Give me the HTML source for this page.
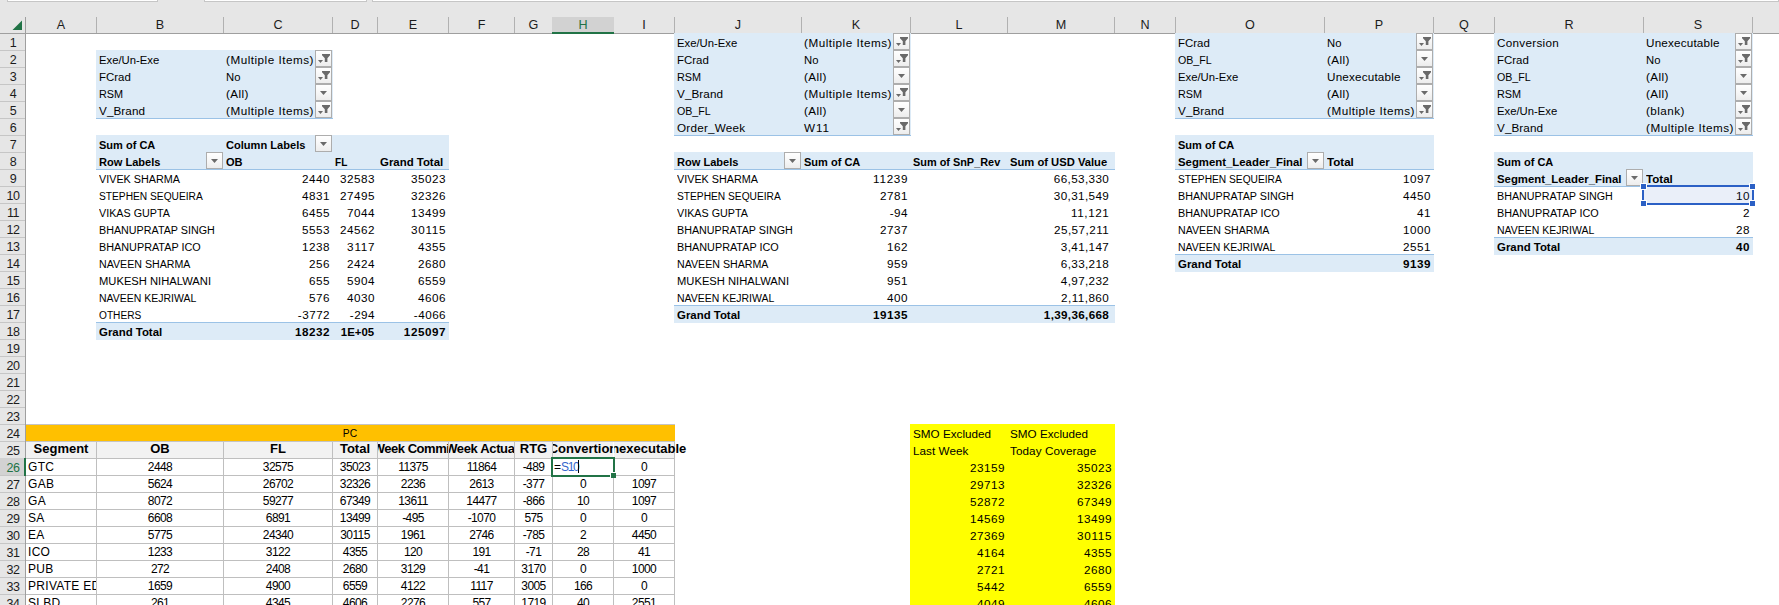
<!DOCTYPE html>
<html><head><meta charset="utf-8"><title>Sheet</title>
<style>
html,body{margin:0;padding:0;background:#fff;}
body{width:1779px;height:605px;overflow:hidden;position:relative;font-family:"Liberation Sans",sans-serif;color:#000;}
#s{position:absolute;left:0;top:0;width:1779px;height:605px;overflow:hidden;background:#fff;}
#s div,#s span,#s svg{position:absolute;}
.f{}
.t{white-space:pre;font-size:11.7px;line-height:17px;height:17px;}
.b{font-weight:bold;}
.l{transform-origin:0 50%;}
.r{transform-origin:100% 50%;}
.c{transform-origin:50% 50%;}
.ch{top:17px;height:16px;line-height:17px;font-size:12.6px;text-align:center;color:#1c1c1c;}
.cs{top:17px;width:1px;height:16px;background:#b1b1b1;}
.rh{left:0.5px;width:25px;height:17px;line-height:19px;font-size:12.5px;letter-spacing:-0.5px;text-align:center;color:#1c1c1c;}
.rs{left:0;width:25px;height:1px;background:#c6c6c6;}
.a{font-size:12px;line-height:17px;height:17px;white-space:pre;text-align:center;overflow:hidden;}
.n{letter-spacing:-0.6px;}
#s .hc{display:flex;justify-content:center;}
#s .hc span{position:static;flex:none;}
.hc{font-size:13px !important;}
.g{background:#bfbfbf;}
</style></head><body><div id="s">

<div style="left:0;top:0;width:1779px;height:34px;background:#e6e6e6"></div>
<div style="left:7px;top:-1px;width:151px;height:2px;background:#fff;border:1px solid #c6c6c6;box-sizing:border-box;height:3px"></div>
<div style="left:204px;top:-1px;width:163px;height:2px;background:#fff;border:1px solid #c6c6c6;box-sizing:border-box;height:3px"></div>
<div style="left:372px;top:-1px;width:1407px;height:2px;background:#fff;border:1px solid #c6c6c6;box-sizing:border-box;height:3px"></div>
<div style="left:0;top:34px;width:26px;height:571px;background:#e6e6e6"></div>
<div style="left:0;top:33px;width:1779px;height:1px;background:#9f9f9f"></div>
<div style="left:25px;top:17px;width:1px;height:588px;background:#9f9f9f"></div>
<svg style="left:12px;top:20px" width="11" height="11" viewBox="0 0 11 11"><path d="M10 0.5 L10 10 L0.5 10 Z" fill="#217346"/></svg>
<div class="ch" style="left:26px;width:70px">A</div>
<div class="ch" style="left:97px;width:126px">B</div>
<div class="ch" style="left:224px;width:108px">C</div>
<div class="ch" style="left:333px;width:44px">D</div>
<div class="ch" style="left:378px;width:70px">E</div>
<div class="ch" style="left:449px;width:65px">F</div>
<div class="ch" style="left:515px;width:37px">G</div>
<div style="left:552px;top:17px;width:62px;height:15px;background:#d2d2d2"></div>
<div style="left:552px;top:32px;width:62px;height:2px;background:#217346"></div>
<div class="ch" style="left:553px;width:60px;color:#217346">H</div>
<div class="ch" style="left:614px;width:60px">I</div>
<div class="ch" style="left:675px;width:126px">J</div>
<div class="ch" style="left:802px;width:108px">K</div>
<div class="ch" style="left:911px;width:96px">L</div>
<div class="ch" style="left:1008px;width:106px">M</div>
<div class="ch" style="left:1115px;width:60px">N</div>
<div class="ch" style="left:1176px;width:148px">O</div>
<div class="ch" style="left:1325px;width:108px">P</div>
<div class="ch" style="left:1434px;width:60px">Q</div>
<div class="ch" style="left:1495px;width:148px">R</div>
<div class="ch" style="left:1644px;width:108px">S</div>
<div class="cs" style="left:96px"></div>
<div class="cs" style="left:223px"></div>
<div class="cs" style="left:332px"></div>
<div class="cs" style="left:377px"></div>
<div class="cs" style="left:448px"></div>
<div class="cs" style="left:514px"></div>
<div class="cs" style="left:674px"></div>
<div class="cs" style="left:801px"></div>
<div class="cs" style="left:910px"></div>
<div class="cs" style="left:1007px"></div>
<div class="cs" style="left:1114px"></div>
<div class="cs" style="left:1175px"></div>
<div class="cs" style="left:1324px"></div>
<div class="cs" style="left:1433px"></div>
<div class="cs" style="left:1494px"></div>
<div class="cs" style="left:1643px"></div>
<div class="cs" style="left:1752px"></div>
<div class="rh" style="top:34px">1</div>
<div class="rs" style="top:50px"></div>
<div class="rh" style="top:51px">2</div>
<div class="rs" style="top:67px"></div>
<div class="rh" style="top:68px">3</div>
<div class="rs" style="top:84px"></div>
<div class="rh" style="top:85px">4</div>
<div class="rs" style="top:101px"></div>
<div class="rh" style="top:102px">5</div>
<div class="rs" style="top:118px"></div>
<div class="rh" style="top:119px">6</div>
<div class="rs" style="top:135px"></div>
<div class="rh" style="top:136px">7</div>
<div class="rs" style="top:152px"></div>
<div class="rh" style="top:153px">8</div>
<div class="rs" style="top:169px"></div>
<div class="rh" style="top:170px">9</div>
<div class="rs" style="top:186px"></div>
<div class="rh" style="top:187px">10</div>
<div class="rs" style="top:203px"></div>
<div class="rh" style="top:204px">11</div>
<div class="rs" style="top:220px"></div>
<div class="rh" style="top:221px">12</div>
<div class="rs" style="top:237px"></div>
<div class="rh" style="top:238px">13</div>
<div class="rs" style="top:254px"></div>
<div class="rh" style="top:255px">14</div>
<div class="rs" style="top:271px"></div>
<div class="rh" style="top:272px">15</div>
<div class="rs" style="top:288px"></div>
<div class="rh" style="top:289px">16</div>
<div class="rs" style="top:305px"></div>
<div class="rh" style="top:306px">17</div>
<div class="rs" style="top:322px"></div>
<div class="rh" style="top:323px">18</div>
<div class="rs" style="top:339px"></div>
<div class="rh" style="top:340px">19</div>
<div class="rs" style="top:356px"></div>
<div class="rh" style="top:357px">20</div>
<div class="rs" style="top:373px"></div>
<div class="rh" style="top:374px">21</div>
<div class="rs" style="top:390px"></div>
<div class="rh" style="top:391px">22</div>
<div class="rs" style="top:407px"></div>
<div class="rh" style="top:408px">23</div>
<div class="rs" style="top:424px"></div>
<div class="rh" style="top:425px">24</div>
<div class="rs" style="top:441px"></div>
<div class="rh" style="top:442px">25</div>
<div class="rs" style="top:458px;width:24px"></div>
<div style="left:0;top:458px;width:25px;height:18px;background:#d2d2d2"></div>
<div style="left:24px;top:458px;width:2px;height:18px;background:#217346"></div>
<div class="rh" style="top:459px;color:#217346">26</div>
<div class="rs" style="top:475px;width:24px"></div>
<div class="rh" style="top:476px">27</div>
<div class="rs" style="top:492px"></div>
<div class="rh" style="top:493px">28</div>
<div class="rs" style="top:509px"></div>
<div class="rh" style="top:510px">29</div>
<div class="rs" style="top:526px"></div>
<div class="rh" style="top:527px">30</div>
<div class="rs" style="top:543px"></div>
<div class="rh" style="top:544px">31</div>
<div class="rs" style="top:560px"></div>
<div class="rh" style="top:561px">32</div>
<div class="rs" style="top:577px"></div>
<div class="rh" style="top:578px">33</div>
<div class="rs" style="top:594px"></div>
<div class="rh" style="top:595px">34</div>
<div class="rs" style="top:611px"></div>
<div class="f" style="left:96px;top:50px;width:237px;height:69px;background:#ddebf7"></div>
<div class="f" style="left:96px;top:135px;width:353px;height:35px;background:#ddebf7"></div>
<div class="f" style="left:96px;top:322px;width:353px;height:18px;background:#ddebf7"></div>
<div class="f" style="left:674px;top:33px;width:237px;height:103px;background:#ddebf7"></div>
<div class="f" style="left:674px;top:152px;width:441px;height:18px;background:#ddebf7"></div>
<div class="f" style="left:674px;top:305px;width:441px;height:18px;background:#ddebf7"></div>
<div class="f" style="left:1175px;top:33px;width:259px;height:86px;background:#ddebf7"></div>
<div class="f" style="left:1175px;top:135px;width:259px;height:35px;background:#ddebf7"></div>
<div class="f" style="left:1175px;top:254px;width:259px;height:18px;background:#ddebf7"></div>
<div class="f" style="left:1494px;top:33px;width:259px;height:103px;background:#ddebf7"></div>
<div class="f" style="left:1494px;top:152px;width:259px;height:35px;background:#ddebf7"></div>
<div class="f" style="left:1494px;top:237px;width:259px;height:18px;background:#ddebf7"></div>
<div class="f" style="left:910px;top:424px;width:205px;height:188px;background:#ffff00"></div>
<div class="f" style="left:26px;top:425px;width:649px;height:16px;background:#ffc000"></div>
<div style="left:96px;top:118px;width:237px;height:1px;background:#9bc2e6"></div>
<div style="left:96px;top:169px;width:353px;height:1px;background:#9bc2e6"></div>
<div style="left:96px;top:322px;width:353px;height:1px;background:#9bc2e6"></div>
<div style="left:674px;top:135px;width:237px;height:1px;background:#9bc2e6"></div>
<div style="left:674px;top:169px;width:441px;height:1px;background:#9bc2e6"></div>
<div style="left:674px;top:305px;width:441px;height:1px;background:#9bc2e6"></div>
<div style="left:1175px;top:118px;width:259px;height:1px;background:#9bc2e6"></div>
<div style="left:1175px;top:169px;width:259px;height:1px;background:#9bc2e6"></div>
<div style="left:1175px;top:254px;width:259px;height:1px;background:#9bc2e6"></div>
<div style="left:1494px;top:135px;width:259px;height:1px;background:#9bc2e6"></div>
<div style="left:1494px;top:186px;width:259px;height:1px;background:#9bc2e6"></div>
<div style="left:1494px;top:237px;width:259px;height:1px;background:#9bc2e6"></div>
<div style="left:26px;top:424px;width:649px;height:1px;background:#c4c4c4"></div>
<div style="left:26px;top:441px;width:649px;height:1px;background:#c4c4c4"></div>
<svg width="0" height="0" style="left:0;top:0"><defs><linearGradient id="bg" x1="0" y1="0" x2="0" y2="1"><stop offset="0" stop-color="#ffffff"/><stop offset="0.5" stop-color="#f7f7f7"/><stop offset="1" stop-color="#ececec"/></linearGradient></defs></svg>
<svg style="left:315px;top:50px" width="17" height="17" viewBox="0 0 17 17"><rect x="0.5" y="0.5" width="16" height="16" fill="url(#bg)" stroke="#adadad"/><path d="M7 4h8v1.2l-2.6 3V12h-2.6V8.2L7 5.2z" fill="#6a6a6a"/><path d="M3 10h5l-2.5 3z" fill="#6a6a6a"/></svg>
<svg style="left:315px;top:67px" width="17" height="17" viewBox="0 0 17 17"><rect x="0.5" y="0.5" width="16" height="16" fill="url(#bg)" stroke="#adadad"/><path d="M7 4h8v1.2l-2.6 3V12h-2.6V8.2L7 5.2z" fill="#6a6a6a"/><path d="M3 10h5l-2.5 3z" fill="#6a6a6a"/></svg>
<svg style="left:315px;top:84px" width="17" height="17" viewBox="0 0 17 17"><rect x="0.5" y="0.5" width="16" height="16" fill="url(#bg)" stroke="#adadad"/><path d="M5 7h7l-3.5 4z" fill="#6a6a6a"/></svg>
<svg style="left:315px;top:101px" width="17" height="17" viewBox="0 0 17 17"><rect x="0.5" y="0.5" width="16" height="16" fill="url(#bg)" stroke="#adadad"/><path d="M7 4h8v1.2l-2.6 3V12h-2.6V8.2L7 5.2z" fill="#6a6a6a"/><path d="M3 10h5l-2.5 3z" fill="#6a6a6a"/></svg>
<svg style="left:315px;top:135px" width="17" height="17" viewBox="0 0 17 17"><rect x="0.5" y="0.5" width="16" height="16" fill="url(#bg)" stroke="#adadad"/><path d="M5 7h7l-3.5 4z" fill="#6a6a6a"/></svg>
<svg style="left:206px;top:152px" width="17" height="17" viewBox="0 0 17 17"><rect x="0.5" y="0.5" width="16" height="16" fill="url(#bg)" stroke="#adadad"/><path d="M5 7h7l-3.5 4z" fill="#6a6a6a"/></svg>
<svg style="left:893px;top:33px" width="17" height="17" viewBox="0 0 17 17"><rect x="0.5" y="0.5" width="16" height="16" fill="url(#bg)" stroke="#adadad"/><path d="M7 4h8v1.2l-2.6 3V12h-2.6V8.2L7 5.2z" fill="#6a6a6a"/><path d="M3 10h5l-2.5 3z" fill="#6a6a6a"/></svg>
<svg style="left:893px;top:50px" width="17" height="17" viewBox="0 0 17 17"><rect x="0.5" y="0.5" width="16" height="16" fill="url(#bg)" stroke="#adadad"/><path d="M7 4h8v1.2l-2.6 3V12h-2.6V8.2L7 5.2z" fill="#6a6a6a"/><path d="M3 10h5l-2.5 3z" fill="#6a6a6a"/></svg>
<svg style="left:893px;top:67px" width="17" height="17" viewBox="0 0 17 17"><rect x="0.5" y="0.5" width="16" height="16" fill="url(#bg)" stroke="#adadad"/><path d="M5 7h7l-3.5 4z" fill="#6a6a6a"/></svg>
<svg style="left:893px;top:84px" width="17" height="17" viewBox="0 0 17 17"><rect x="0.5" y="0.5" width="16" height="16" fill="url(#bg)" stroke="#adadad"/><path d="M7 4h8v1.2l-2.6 3V12h-2.6V8.2L7 5.2z" fill="#6a6a6a"/><path d="M3 10h5l-2.5 3z" fill="#6a6a6a"/></svg>
<svg style="left:893px;top:101px" width="17" height="17" viewBox="0 0 17 17"><rect x="0.5" y="0.5" width="16" height="16" fill="url(#bg)" stroke="#adadad"/><path d="M5 7h7l-3.5 4z" fill="#6a6a6a"/></svg>
<svg style="left:893px;top:118px" width="17" height="17" viewBox="0 0 17 17"><rect x="0.5" y="0.5" width="16" height="16" fill="url(#bg)" stroke="#adadad"/><path d="M7 4h8v1.2l-2.6 3V12h-2.6V8.2L7 5.2z" fill="#6a6a6a"/><path d="M3 10h5l-2.5 3z" fill="#6a6a6a"/></svg>
<svg style="left:784px;top:152px" width="17" height="17" viewBox="0 0 17 17"><rect x="0.5" y="0.5" width="16" height="16" fill="url(#bg)" stroke="#adadad"/><path d="M5 7h7l-3.5 4z" fill="#6a6a6a"/></svg>
<svg style="left:1416px;top:33px" width="17" height="17" viewBox="0 0 17 17"><rect x="0.5" y="0.5" width="16" height="16" fill="url(#bg)" stroke="#adadad"/><path d="M7 4h8v1.2l-2.6 3V12h-2.6V8.2L7 5.2z" fill="#6a6a6a"/><path d="M3 10h5l-2.5 3z" fill="#6a6a6a"/></svg>
<svg style="left:1416px;top:50px" width="17" height="17" viewBox="0 0 17 17"><rect x="0.5" y="0.5" width="16" height="16" fill="url(#bg)" stroke="#adadad"/><path d="M5 7h7l-3.5 4z" fill="#6a6a6a"/></svg>
<svg style="left:1416px;top:67px" width="17" height="17" viewBox="0 0 17 17"><rect x="0.5" y="0.5" width="16" height="16" fill="url(#bg)" stroke="#adadad"/><path d="M7 4h8v1.2l-2.6 3V12h-2.6V8.2L7 5.2z" fill="#6a6a6a"/><path d="M3 10h5l-2.5 3z" fill="#6a6a6a"/></svg>
<svg style="left:1416px;top:84px" width="17" height="17" viewBox="0 0 17 17"><rect x="0.5" y="0.5" width="16" height="16" fill="url(#bg)" stroke="#adadad"/><path d="M5 7h7l-3.5 4z" fill="#6a6a6a"/></svg>
<svg style="left:1416px;top:101px" width="17" height="17" viewBox="0 0 17 17"><rect x="0.5" y="0.5" width="16" height="16" fill="url(#bg)" stroke="#adadad"/><path d="M7 4h8v1.2l-2.6 3V12h-2.6V8.2L7 5.2z" fill="#6a6a6a"/><path d="M3 10h5l-2.5 3z" fill="#6a6a6a"/></svg>
<svg style="left:1307px;top:152px" width="17" height="17" viewBox="0 0 17 17"><rect x="0.5" y="0.5" width="16" height="16" fill="url(#bg)" stroke="#adadad"/><path d="M5 7h7l-3.5 4z" fill="#6a6a6a"/></svg>
<svg style="left:1735px;top:33px" width="17" height="17" viewBox="0 0 17 17"><rect x="0.5" y="0.5" width="16" height="16" fill="url(#bg)" stroke="#adadad"/><path d="M7 4h8v1.2l-2.6 3V12h-2.6V8.2L7 5.2z" fill="#6a6a6a"/><path d="M3 10h5l-2.5 3z" fill="#6a6a6a"/></svg>
<svg style="left:1735px;top:50px" width="17" height="17" viewBox="0 0 17 17"><rect x="0.5" y="0.5" width="16" height="16" fill="url(#bg)" stroke="#adadad"/><path d="M7 4h8v1.2l-2.6 3V12h-2.6V8.2L7 5.2z" fill="#6a6a6a"/><path d="M3 10h5l-2.5 3z" fill="#6a6a6a"/></svg>
<svg style="left:1735px;top:67px" width="17" height="17" viewBox="0 0 17 17"><rect x="0.5" y="0.5" width="16" height="16" fill="url(#bg)" stroke="#adadad"/><path d="M5 7h7l-3.5 4z" fill="#6a6a6a"/></svg>
<svg style="left:1735px;top:84px" width="17" height="17" viewBox="0 0 17 17"><rect x="0.5" y="0.5" width="16" height="16" fill="url(#bg)" stroke="#adadad"/><path d="M5 7h7l-3.5 4z" fill="#6a6a6a"/></svg>
<svg style="left:1735px;top:101px" width="17" height="17" viewBox="0 0 17 17"><rect x="0.5" y="0.5" width="16" height="16" fill="url(#bg)" stroke="#adadad"/><path d="M7 4h8v1.2l-2.6 3V12h-2.6V8.2L7 5.2z" fill="#6a6a6a"/><path d="M3 10h5l-2.5 3z" fill="#6a6a6a"/></svg>
<svg style="left:1735px;top:118px" width="17" height="17" viewBox="0 0 17 17"><rect x="0.5" y="0.5" width="16" height="16" fill="url(#bg)" stroke="#adadad"/><path d="M7 4h8v1.2l-2.6 3V12h-2.6V8.2L7 5.2z" fill="#6a6a6a"/><path d="M3 10h5l-2.5 3z" fill="#6a6a6a"/></svg>
<svg style="left:1626px;top:169px" width="17" height="17" viewBox="0 0 17 17"><rect x="0.5" y="0.5" width="16" height="16" fill="url(#bg)" stroke="#adadad"/><path d="M5 7h7l-3.5 4z" fill="#6a6a6a"/></svg>
<span class="t l" style="left:99px;top:51px;transform:scaleX(0.9670);">Exe/Un-Exe</span>
<span class="t l" style="left:226px;top:51px;letter-spacing:0.507px;">(Multiple Items)</span>
<span class="t l" style="left:99px;top:68px;transform:scaleX(0.9789);">FCrad</span>
<span class="t l" style="left:226px;top:68px;transform:scaleX(0.9630);">No</span>
<span class="t l" style="left:99px;top:85px;transform:scaleX(0.9275);">RSM</span>
<span class="t l" style="left:226px;top:85px;letter-spacing:0.384px;">(All)</span>
<span class="t l" style="left:99px;top:102px;letter-spacing:0.088px;">V_Brand</span>
<span class="t l" style="left:226px;top:102px;letter-spacing:0.507px;">(Multiple Items)</span>
<span class="t b l" style="left:99px;top:136px;transform:scaleX(0.9425);">Sum of CA</span>
<span class="t b l" style="left:226px;top:136px;transform:scaleX(0.9477);">Column Labels</span>
<span class="t b l" style="left:99px;top:153px;transform:scaleX(0.9468);">Row Labels</span>
<span class="t b l" style="left:226px;top:153px;transform:scaleX(0.9469);">OB</span>
<span class="t b l" style="left:335px;top:153px;transform:scaleX(0.8613);">FL</span>
<span class="t b l" style="left:380px;top:153px;transform:scaleX(0.9765);">Grand Total</span>
<span class="t l" style="left:99px;top:170px;transform:scaleX(0.9237);">VIVEK SHARMA</span>
<span class="t r" style="right:1448.83px;top:170px;letter-spacing:0.571px;">2440</span>
<span class="t r" style="right:1403.84px;top:170px;letter-spacing:0.557px;">32583</span>
<span class="t r" style="right:1332.84px;top:170px;letter-spacing:0.557px;">35023</span>
<span class="t l" style="left:99px;top:187px;transform:scaleX(0.8733);">STEPHEN SEQUEIRA</span>
<span class="t r" style="right:1448.83px;top:187px;letter-spacing:0.571px;">4831</span>
<span class="t r" style="right:1403.84px;top:187px;letter-spacing:0.557px;">27495</span>
<span class="t r" style="right:1332.84px;top:187px;letter-spacing:0.557px;">32326</span>
<span class="t l" style="left:99px;top:204px;transform:scaleX(0.9198);">VIKAS GUPTA</span>
<span class="t r" style="right:1448.83px;top:204px;letter-spacing:0.571px;">6455</span>
<span class="t r" style="right:1403.83px;top:204px;letter-spacing:0.571px;">7044</span>
<span class="t r" style="right:1332.84px;top:204px;letter-spacing:0.557px;">13499</span>
<span class="t l" style="left:99px;top:221px;transform:scaleX(0.9190);">BHANUPRATAP SINGH</span>
<span class="t r" style="right:1448.83px;top:221px;letter-spacing:0.571px;">5553</span>
<span class="t r" style="right:1403.84px;top:221px;letter-spacing:0.557px;">24562</span>
<span class="t r" style="right:1332.67px;top:221px;letter-spacing:0.732px;">30115</span>
<span class="t l" style="left:99px;top:238px;transform:scaleX(0.9265);">BHANUPRATAP ICO</span>
<span class="t r" style="right:1448.83px;top:238px;letter-spacing:0.571px;">1238</span>
<span class="t r" style="right:1403.61px;top:238px;letter-spacing:0.790px;">3117</span>
<span class="t r" style="right:1332.83px;top:238px;letter-spacing:0.571px;">4355</span>
<span class="t l" style="left:99px;top:255px;transform:scaleX(0.9099);">NAVEEN SHARMA</span>
<span class="t r" style="right:1448.81px;top:255px;letter-spacing:0.595px;">256</span>
<span class="t r" style="right:1403.83px;top:255px;letter-spacing:0.571px;">2424</span>
<span class="t r" style="right:1332.83px;top:255px;letter-spacing:0.571px;">2680</span>
<span class="t l" style="left:99px;top:272px;transform:scaleX(0.9582);">MUKESH NIHALWANI</span>
<span class="t r" style="right:1448.81px;top:272px;letter-spacing:0.595px;">655</span>
<span class="t r" style="right:1403.83px;top:272px;letter-spacing:0.571px;">5904</span>
<span class="t r" style="right:1332.83px;top:272px;letter-spacing:0.571px;">6559</span>
<span class="t l" style="left:99px;top:289px;transform:scaleX(0.8970);">NAVEEN KEJRIWAL</span>
<span class="t r" style="right:1448.81px;top:289px;letter-spacing:0.595px;">576</span>
<span class="t r" style="right:1403.83px;top:289px;letter-spacing:0.571px;">4030</span>
<span class="t r" style="right:1332.83px;top:289px;letter-spacing:0.571px;">4606</span>
<span class="t l" style="left:99px;top:306px;transform:scaleX(0.8665);">OTHERS</span>
<span class="t r" style="right:1448.92px;top:306px;letter-spacing:0.479px;">-3772</span>
<span class="t r" style="right:1403.93px;top:306px;letter-spacing:0.473px;">-294</span>
<span class="t r" style="right:1332.92px;top:306px;letter-spacing:0.479px;">-4066</span>
<span class="t b l" style="left:99px;top:323px;transform:scaleX(0.9765);">Grand Total</span>
<span class="t b r" style="right:1448.84px;top:323px;letter-spacing:0.557px;">18232</span>
<span class="t b r" style="right:1404.40px;top:323px;transform:scaleX(0.9758);">1E+05</span>
<span class="t b r" style="right:1332.85px;top:323px;letter-spacing:0.547px;">125097</span>
<span class="t l" style="left:677px;top:34px;transform:scaleX(0.9670);">Exe/Un-Exe</span>
<span class="t l" style="left:804px;top:34px;letter-spacing:0.507px;">(Multiple Items)</span>
<span class="t l" style="left:677px;top:51px;transform:scaleX(0.9789);">FCrad</span>
<span class="t l" style="left:804px;top:51px;transform:scaleX(0.9630);">No</span>
<span class="t l" style="left:677px;top:68px;transform:scaleX(0.9275);">RSM</span>
<span class="t l" style="left:804px;top:68px;letter-spacing:0.384px;">(All)</span>
<span class="t l" style="left:677px;top:85px;letter-spacing:0.088px;">V_Brand</span>
<span class="t l" style="left:804px;top:85px;letter-spacing:0.507px;">(Multiple Items)</span>
<span class="t l" style="left:677px;top:102px;transform:scaleX(0.9100);">OB_FL</span>
<span class="t l" style="left:804px;top:102px;letter-spacing:0.384px;">(All)</span>
<span class="t l" style="left:677px;top:119px;letter-spacing:0.235px;">Order_Week</span>
<span class="t l" style="left:804px;top:119px;letter-spacing:0.876px;">W11</span>
<span class="t b l" style="left:677px;top:153px;transform:scaleX(0.9468);">Row Labels</span>
<span class="t b l" style="left:804px;top:153px;transform:scaleX(0.9425);">Sum of CA</span>
<span class="t b l" style="left:913px;top:153px;transform:scaleX(0.9323);">Sum of SnP_Rev</span>
<span class="t b l" style="left:1010px;top:153px;transform:scaleX(0.9594);">Sum of USD Value</span>
<span class="t l" style="left:677px;top:170px;transform:scaleX(0.9237);">VIVEK SHARMA</span>
<span class="t r" style="right:870.67px;top:170px;letter-spacing:0.732px;">11239</span>
<span class="t r" style="right:669.83px;top:170px;letter-spacing:0.367px;">66,53,330</span>
<span class="t l" style="left:677px;top:187px;transform:scaleX(0.8733);">STEPHEN SEQUEIRA</span>
<span class="t r" style="right:870.83px;top:187px;letter-spacing:0.571px;">2781</span>
<span class="t r" style="right:669.83px;top:187px;letter-spacing:0.367px;">30,31,549</span>
<span class="t l" style="left:677px;top:204px;transform:scaleX(0.9198);">VIKAS GUPTA</span>
<span class="t r" style="right:870.94px;top:204px;letter-spacing:0.465px;">-94</span>
<span class="t r" style="right:669.63px;top:204px;letter-spacing:0.568px;">11,121</span>
<span class="t l" style="left:677px;top:221px;transform:scaleX(0.9190);">BHANUPRATAP SINGH</span>
<span class="t r" style="right:870.83px;top:221px;letter-spacing:0.571px;">2737</span>
<span class="t r" style="right:669.74px;top:221px;letter-spacing:0.462px;">25,57,211</span>
<span class="t l" style="left:677px;top:238px;transform:scaleX(0.9265);">BHANUPRATAP ICO</span>
<span class="t r" style="right:870.81px;top:238px;letter-spacing:0.595px;">162</span>
<span class="t r" style="right:669.85px;top:238px;letter-spacing:0.350px;">3,41,147</span>
<span class="t l" style="left:677px;top:255px;transform:scaleX(0.9099);">NAVEEN SHARMA</span>
<span class="t r" style="right:870.81px;top:255px;letter-spacing:0.595px;">959</span>
<span class="t r" style="right:669.85px;top:255px;letter-spacing:0.350px;">6,33,218</span>
<span class="t l" style="left:677px;top:272px;transform:scaleX(0.9582);">MUKESH NIHALWANI</span>
<span class="t r" style="right:870.81px;top:272px;letter-spacing:0.595px;">951</span>
<span class="t r" style="right:669.85px;top:272px;letter-spacing:0.350px;">4,97,232</span>
<span class="t l" style="left:677px;top:289px;transform:scaleX(0.8970);">NAVEEN KEJRIWAL</span>
<span class="t r" style="right:870.81px;top:289px;letter-spacing:0.595px;">400</span>
<span class="t r" style="right:669.74px;top:289px;letter-spacing:0.457px;">2,11,860</span>
<span class="t b l" style="left:677px;top:306px;transform:scaleX(0.9765);">Grand Total</span>
<span class="t b r" style="right:870.84px;top:306px;letter-spacing:0.557px;">19135</span>
<span class="t b r" style="right:669.88px;top:306px;letter-spacing:0.323px;">1,39,36,668</span>
<span class="t l" style="left:1178px;top:34px;transform:scaleX(0.9789);">FCrad</span>
<span class="t l" style="left:1327px;top:34px;transform:scaleX(0.9630);">No</span>
<span class="t l" style="left:1178px;top:51px;transform:scaleX(0.9100);">OB_FL</span>
<span class="t l" style="left:1327px;top:51px;letter-spacing:0.384px;">(All)</span>
<span class="t l" style="left:1178px;top:68px;transform:scaleX(0.9670);">Exe/Un-Exe</span>
<span class="t l" style="left:1327px;top:68px;letter-spacing:0.185px;">Unexecutable</span>
<span class="t l" style="left:1178px;top:85px;transform:scaleX(0.9275);">RSM</span>
<span class="t l" style="left:1327px;top:85px;letter-spacing:0.384px;">(All)</span>
<span class="t l" style="left:1178px;top:102px;letter-spacing:0.088px;">V_Brand</span>
<span class="t l" style="left:1327px;top:102px;letter-spacing:0.507px;">(Multiple Items)</span>
<span class="t b l" style="left:1178px;top:136px;transform:scaleX(0.9425);">Sum of CA</span>
<span class="t b l" style="left:1178px;top:153px;transform:scaleX(0.9729);">Segment_Leader_Final</span>
<span class="t b l" style="left:1327px;top:153px;transform:scaleX(0.9903);">Total</span>
<span class="t l" style="left:1178px;top:170px;transform:scaleX(0.8733);">STEPHEN SEQUEIRA</span>
<span class="t r" style="right:347.83px;top:170px;letter-spacing:0.571px;">1097</span>
<span class="t l" style="left:1178px;top:187px;transform:scaleX(0.9190);">BHANUPRATAP SINGH</span>
<span class="t r" style="right:347.83px;top:187px;letter-spacing:0.571px;">4450</span>
<span class="t l" style="left:1178px;top:204px;transform:scaleX(0.9265);">BHANUPRATAP ICO</span>
<span class="t r" style="right:347.76px;top:204px;letter-spacing:0.642px;">41</span>
<span class="t l" style="left:1178px;top:221px;transform:scaleX(0.9099);">NAVEEN SHARMA</span>
<span class="t r" style="right:347.83px;top:221px;letter-spacing:0.571px;">1000</span>
<span class="t l" style="left:1178px;top:238px;transform:scaleX(0.8970);">NAVEEN KEJRIWAL</span>
<span class="t r" style="right:347.83px;top:238px;letter-spacing:0.571px;">2551</span>
<span class="t b l" style="left:1178px;top:255px;transform:scaleX(0.9765);">Grand Total</span>
<span class="t b r" style="right:347.83px;top:255px;letter-spacing:0.571px;">9139</span>
<span class="t l" style="left:1497px;top:34px;letter-spacing:0.298px;">Conversion</span>
<span class="t l" style="left:1646px;top:34px;letter-spacing:0.185px;">Unexecutable</span>
<span class="t l" style="left:1497px;top:51px;transform:scaleX(0.9789);">FCrad</span>
<span class="t l" style="left:1646px;top:51px;transform:scaleX(0.9630);">No</span>
<span class="t l" style="left:1497px;top:68px;transform:scaleX(0.9100);">OB_FL</span>
<span class="t l" style="left:1646px;top:68px;letter-spacing:0.384px;">(All)</span>
<span class="t l" style="left:1497px;top:85px;transform:scaleX(0.9275);">RSM</span>
<span class="t l" style="left:1646px;top:85px;letter-spacing:0.384px;">(All)</span>
<span class="t l" style="left:1497px;top:102px;transform:scaleX(0.9670);">Exe/Un-Exe</span>
<span class="t l" style="left:1646px;top:102px;letter-spacing:0.452px;">(blank)</span>
<span class="t l" style="left:1497px;top:119px;letter-spacing:0.088px;">V_Brand</span>
<span class="t l" style="left:1646px;top:119px;letter-spacing:0.507px;">(Multiple Items)</span>
<span class="t b l" style="left:1497px;top:153px;transform:scaleX(0.9425);">Sum of CA</span>
<span class="t b l" style="left:1497px;top:170px;transform:scaleX(0.9729);">Segment_Leader_Final</span>
<span class="t b l" style="left:1646px;top:170px;transform:scaleX(0.9903);">Total</span>
<span class="t l" style="left:1497px;top:187px;transform:scaleX(0.9190);">BHANUPRATAP SINGH</span>
<span class="t r" style="right:28.76px;top:187px;letter-spacing:0.642px;">10</span>
<span class="t l" style="left:1497px;top:204px;transform:scaleX(0.9265);">BHANUPRATAP ICO</span>
<span class="t r" style="right:28.62px;top:204px;letter-spacing:0.784px;">2</span>
<span class="t l" style="left:1497px;top:221px;transform:scaleX(0.8970);">NAVEEN KEJRIWAL</span>
<span class="t r" style="right:28.76px;top:221px;letter-spacing:0.642px;">28</span>
<span class="t b l" style="left:1497px;top:238px;transform:scaleX(0.9765);">Grand Total</span>
<span class="t b r" style="right:28.76px;top:238px;letter-spacing:0.642px;">40</span>
<span class="t l" style="left:913px;top:425px;letter-spacing:0.004px;">SMO Excluded</span>
<span class="t l" style="left:1010px;top:425px;letter-spacing:0.004px;">SMO Excluded</span>
<span class="t l" style="left:913px;top:442px;letter-spacing:0.054px;">Last Week</span>
<span class="t l" style="left:1010px;top:442px;letter-spacing:0.084px;">Today Coverage</span>
<span class="t r" style="right:773.84px;top:459px;letter-spacing:0.557px;">23159</span>
<span class="t r" style="right:666.84px;top:459px;letter-spacing:0.557px;">35023</span>
<span class="t r" style="right:773.84px;top:476px;letter-spacing:0.557px;">29713</span>
<span class="t r" style="right:666.84px;top:476px;letter-spacing:0.557px;">32326</span>
<span class="t r" style="right:773.84px;top:493px;letter-spacing:0.557px;">52872</span>
<span class="t r" style="right:666.84px;top:493px;letter-spacing:0.557px;">67349</span>
<span class="t r" style="right:773.84px;top:510px;letter-spacing:0.557px;">14569</span>
<span class="t r" style="right:666.84px;top:510px;letter-spacing:0.557px;">13499</span>
<span class="t r" style="right:773.84px;top:527px;letter-spacing:0.557px;">27369</span>
<span class="t r" style="right:666.67px;top:527px;letter-spacing:0.732px;">30115</span>
<span class="t r" style="right:773.83px;top:544px;letter-spacing:0.571px;">4164</span>
<span class="t r" style="right:666.83px;top:544px;letter-spacing:0.571px;">4355</span>
<span class="t r" style="right:773.83px;top:561px;letter-spacing:0.571px;">2721</span>
<span class="t r" style="right:666.83px;top:561px;letter-spacing:0.571px;">2680</span>
<span class="t r" style="right:773.83px;top:578px;letter-spacing:0.571px;">5442</span>
<span class="t r" style="right:666.83px;top:578px;letter-spacing:0.571px;">6559</span>
<span class="t r" style="right:773.83px;top:595px;letter-spacing:0.571px;">4049</span>
<span class="t r" style="right:666.83px;top:595px;letter-spacing:0.571px;">4606</span>
<span class="t c" style="left:26px;width:648px;text-align:center;top:424px;transform:scaleX(0.8800);">PC</span>
<div style="left:26px;top:442px;width:70px;height:16px;background:#f2f2f2"></div>
<div style="left:97px;top:442px;width:126px;height:16px;background:#f2f2f2"></div>
<div style="left:224px;top:442px;width:108px;height:16px;background:#f2f2f2"></div>
<div style="left:333px;top:442px;width:44px;height:16px;background:#f2f2f2"></div>
<div style="left:378px;top:442px;width:70px;height:16px;background:#f2f2f2"></div>
<div style="left:449px;top:442px;width:65px;height:16px;background:#f2f2f2"></div>
<div style="left:515px;top:442px;width:37px;height:16px;background:#f2f2f2"></div>
<div style="left:553px;top:442px;width:60px;height:16px;background:#f2f2f2"></div>
<div style="left:614px;top:442px;width:60px;height:16px;background:#f2f2f2"></div>
<div class="g" style="left:26px;top:458px;width:649px;height:1px"></div>
<div class="g" style="left:26px;top:475px;width:649px;height:1px"></div>
<div class="g" style="left:26px;top:492px;width:649px;height:1px"></div>
<div class="g" style="left:26px;top:509px;width:649px;height:1px"></div>
<div class="g" style="left:26px;top:526px;width:649px;height:1px"></div>
<div class="g" style="left:26px;top:543px;width:649px;height:1px"></div>
<div class="g" style="left:26px;top:560px;width:649px;height:1px"></div>
<div class="g" style="left:26px;top:577px;width:649px;height:1px"></div>
<div class="g" style="left:26px;top:594px;width:649px;height:1px"></div>
<div class="g" style="left:26px;top:611px;width:649px;height:1px"></div>
<div class="g" style="left:96px;top:442px;width:1px;height:163px"></div>
<div class="g" style="left:223px;top:442px;width:1px;height:163px"></div>
<div class="g" style="left:332px;top:442px;width:1px;height:163px"></div>
<div class="g" style="left:377px;top:442px;width:1px;height:163px"></div>
<div class="g" style="left:448px;top:442px;width:1px;height:163px"></div>
<div class="g" style="left:514px;top:442px;width:1px;height:163px"></div>
<div class="g" style="left:552px;top:442px;width:1px;height:163px"></div>
<div class="g" style="left:613px;top:459px;width:1px;height:146px"></div>
<div class="g" style="left:674px;top:442px;width:1px;height:163px"></div>
<div class="a b hc" style="left:26px;top:440px;width:70px"><span>Segment</span></div>
<div class="a b hc" style="left:97px;top:440px;width:126px"><span>OB</span></div>
<div class="a b hc" style="left:224px;top:440px;width:108px"><span>FL</span></div>
<div class="a b hc" style="left:333px;top:440px;width:44px"><span>Total</span></div>
<div class="a b hc" style="left:378px;top:440px;width:70px;letter-spacing:-0.47px"><span>Week Commit</span></div>
<div class="a b hc" style="left:449px;top:440px;width:65px;letter-spacing:-0.36px"><span>Week Actual</span></div>
<div class="a b hc" style="left:515px;top:440px;width:37px"><span>RTG</span></div>
<div class="a b hc" style="left:553px;top:440px;width:60px"><span>Convertion</span></div>
<div class="a b" style="font-size:13px;left:614px;top:440px;width:80px;overflow:hidden"><span style="position:absolute;left:-12.25px;top:0">Unexecutable</span></div>
<div class="a" style="left:28px;top:459px;width:68px;text-align:left;letter-spacing:0.3px">GTC</div>
<div class="a n" style="left:97px;top:459px;width:126px">2448</div>
<div class="a n" style="left:224px;top:459px;width:108px">32575</div>
<div class="a n" style="left:333px;top:459px;width:44px">35023</div>
<div class="a n" style="left:378px;top:459px;width:70px">11375</div>
<div class="a n" style="left:449px;top:459px;width:65px">11864</div>
<div class="a n" style="left:515px;top:459px;width:37px">-489</div>
<div class="a n" style="left:614px;top:459px;width:60px">0</div>
<div class="a" style="left:28px;top:476px;width:68px;text-align:left;letter-spacing:0.3px">GAB</div>
<div class="a n" style="left:97px;top:476px;width:126px">5624</div>
<div class="a n" style="left:224px;top:476px;width:108px">26702</div>
<div class="a n" style="left:333px;top:476px;width:44px">32326</div>
<div class="a n" style="left:378px;top:476px;width:70px">2236</div>
<div class="a n" style="left:449px;top:476px;width:65px">2613</div>
<div class="a n" style="left:515px;top:476px;width:37px">-377</div>
<div class="a n" style="left:553px;top:476px;width:60px">0</div>
<div class="a n" style="left:614px;top:476px;width:60px">1097</div>
<div class="a" style="left:28px;top:493px;width:68px;text-align:left;letter-spacing:0.3px">GA</div>
<div class="a n" style="left:97px;top:493px;width:126px">8072</div>
<div class="a n" style="left:224px;top:493px;width:108px">59277</div>
<div class="a n" style="left:333px;top:493px;width:44px">67349</div>
<div class="a n" style="left:378px;top:493px;width:70px">13611</div>
<div class="a n" style="left:449px;top:493px;width:65px">14477</div>
<div class="a n" style="left:515px;top:493px;width:37px">-866</div>
<div class="a n" style="left:553px;top:493px;width:60px">10</div>
<div class="a n" style="left:614px;top:493px;width:60px">1097</div>
<div class="a" style="left:28px;top:510px;width:68px;text-align:left;letter-spacing:0.3px">SA</div>
<div class="a n" style="left:97px;top:510px;width:126px">6608</div>
<div class="a n" style="left:224px;top:510px;width:108px">6891</div>
<div class="a n" style="left:333px;top:510px;width:44px">13499</div>
<div class="a n" style="left:378px;top:510px;width:70px">-495</div>
<div class="a n" style="left:449px;top:510px;width:65px">-1070</div>
<div class="a n" style="left:515px;top:510px;width:37px">575</div>
<div class="a n" style="left:553px;top:510px;width:60px">0</div>
<div class="a n" style="left:614px;top:510px;width:60px">0</div>
<div class="a" style="left:28px;top:527px;width:68px;text-align:left;letter-spacing:0.3px">EA</div>
<div class="a n" style="left:97px;top:527px;width:126px">5775</div>
<div class="a n" style="left:224px;top:527px;width:108px">24340</div>
<div class="a n" style="left:333px;top:527px;width:44px">30115</div>
<div class="a n" style="left:378px;top:527px;width:70px">1961</div>
<div class="a n" style="left:449px;top:527px;width:65px">2746</div>
<div class="a n" style="left:515px;top:527px;width:37px">-785</div>
<div class="a n" style="left:553px;top:527px;width:60px">2</div>
<div class="a n" style="left:614px;top:527px;width:60px">4450</div>
<div class="a" style="left:28px;top:544px;width:68px;text-align:left;letter-spacing:0.3px">ICO</div>
<div class="a n" style="left:97px;top:544px;width:126px">1233</div>
<div class="a n" style="left:224px;top:544px;width:108px">3122</div>
<div class="a n" style="left:333px;top:544px;width:44px">4355</div>
<div class="a n" style="left:378px;top:544px;width:70px">120</div>
<div class="a n" style="left:449px;top:544px;width:65px">191</div>
<div class="a n" style="left:515px;top:544px;width:37px">-71</div>
<div class="a n" style="left:553px;top:544px;width:60px">28</div>
<div class="a n" style="left:614px;top:544px;width:60px">41</div>
<div class="a" style="left:28px;top:561px;width:68px;text-align:left;letter-spacing:0.3px">PUB</div>
<div class="a n" style="left:97px;top:561px;width:126px">272</div>
<div class="a n" style="left:224px;top:561px;width:108px">2408</div>
<div class="a n" style="left:333px;top:561px;width:44px">2680</div>
<div class="a n" style="left:378px;top:561px;width:70px">3129</div>
<div class="a n" style="left:449px;top:561px;width:65px">-41</div>
<div class="a n" style="left:515px;top:561px;width:37px">3170</div>
<div class="a n" style="left:553px;top:561px;width:60px">0</div>
<div class="a n" style="left:614px;top:561px;width:60px">1000</div>
<div class="a" style="left:28px;top:578px;width:68px;text-align:left;letter-spacing:0.3px">PRIVATE EDU</div>
<div class="a n" style="left:97px;top:578px;width:126px">1659</div>
<div class="a n" style="left:224px;top:578px;width:108px">4900</div>
<div class="a n" style="left:333px;top:578px;width:44px">6559</div>
<div class="a n" style="left:378px;top:578px;width:70px">4122</div>
<div class="a n" style="left:449px;top:578px;width:65px">1117</div>
<div class="a n" style="left:515px;top:578px;width:37px">3005</div>
<div class="a n" style="left:553px;top:578px;width:60px">166</div>
<div class="a n" style="left:614px;top:578px;width:60px">0</div>
<div class="a" style="left:28px;top:595px;width:68px;text-align:left;letter-spacing:0.3px">SLBD</div>
<div class="a n" style="left:97px;top:595px;width:126px">261</div>
<div class="a n" style="left:224px;top:595px;width:108px">4345</div>
<div class="a n" style="left:333px;top:595px;width:44px">4606</div>
<div class="a n" style="left:378px;top:595px;width:70px">2276</div>
<div class="a n" style="left:449px;top:595px;width:65px">557</div>
<div class="a n" style="left:515px;top:595px;width:37px">1719</div>
<div class="a n" style="left:553px;top:595px;width:60px">40</div>
<div class="a n" style="left:614px;top:595px;width:60px">2551</div>
<div style="left:553px;top:459px;width:60px;height:16px;background:#fff"></div>
<div class="a" style="left:554px;top:459px;width:50px;text-align:left"><span style="position:static">=</span><span style="position:static;color:#3366cc;letter-spacing:-1.3px">S10</span></div>
<div style="left:578px;top:460px;width:1px;height:13px;background:#000"></div>
<div style="left:551px;top:457px;width:64px;height:20px;border:2px solid #217346;box-sizing:border-box"></div>
<div style="left:610px;top:472px;width:5px;height:5px;background:#217346;border-left:1px solid #fff;border-top:1px solid #fff"></div>
<div style="left:1644px;top:187px;width:108px;height:16px;background:rgba(60,110,200,0.11)"></div>
<div style="left:1647px;top:185px;width:102px;height:2px;background:#2b60c5"></div>
<div style="left:1647px;top:203px;width:102px;height:2px;background:#2b60c5"></div>
<div style="left:1642px;top:190px;width:2px;height:10px;background:#2b60c5"></div>
<div style="left:1752px;top:190px;width:2px;height:10px;background:#2b60c5"></div>
<div style="left:1641px;top:184px;width:5px;height:5px;background:#2b60c5;box-shadow:0 0 0 1px #fff"></div>
<div style="left:1750px;top:184px;width:5px;height:5px;background:#2b60c5;box-shadow:0 0 0 1px #fff"></div>
<div style="left:1641px;top:201px;width:5px;height:5px;background:#2b60c5;box-shadow:0 0 0 1px #fff"></div>
<div style="left:1750px;top:201px;width:5px;height:5px;background:#2b60c5;box-shadow:0 0 0 1px #fff"></div>
</div></body></html>
